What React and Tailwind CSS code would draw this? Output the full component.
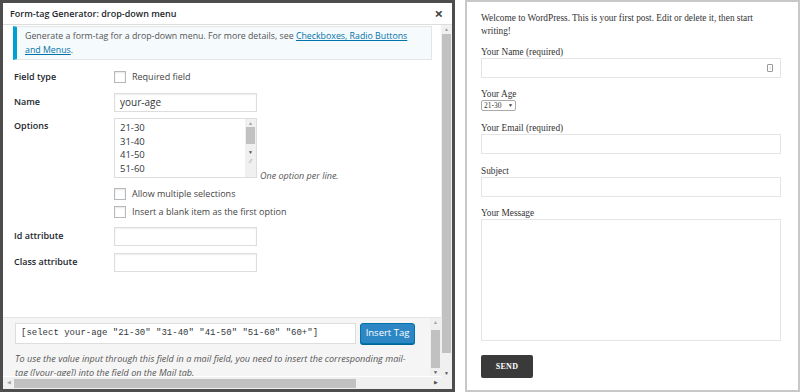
import React from 'react';

const ui = { fontFamily: '"Open Sans", "Noto Sans", sans-serif' };
const serif = { fontFamily: '"Liberation Serif", "DejaVu Serif", serif' };

const Checkbox = ({ label }) => (
  <label className="flex items-center gap-[6px] h-[18px]">
    <span className="w-[12px] h-[12px] border border-[#b4b9be] bg-white shadow-[inset_0_1px_2px_rgba(0,0,0,0.1)]"></span>
    <span className="text-[9px] text-[#444]">{label}</span>
  </label>
);

const TextInput = ({ value }) => (
  <div className="w-[143px] h-[19px] border border-[#ddd] bg-white shadow-[inset_0_1px_2px_rgba(0,0,0,0.07)] flex items-center px-[5px] text-[10px] text-[#32373c]">
    {value}
  </div>
);

const Row = ({ label, children, className = '' }) => (
  <div className={'flex ' + className}>
    <div className="w-[100px] text-[9px] font-semibold text-[#23282d] pt-[2px]">{label}</div>
    <div>{children}</div>
  </div>
);

// windows style scrollbar
const VScroll = ({ thumbTop, thumbBottom, className = '' }) => (
  <div className={'w-[11px] bg-[#f0f0f0] flex flex-col items-center ' + className}>
    <span className="text-[5px] leading-[8px] text-[#a3a3a3]">▲</span>
    <div className="w-[9px] bg-[#c1c1c1] flex-1" style={{ marginTop: thumbTop, marginBottom: thumbBottom }}></div>
    <span className="text-[5px] leading-[8px] text-[#505050]">▼</span>
  </div>
);

const FormTagGenerator = () => (
  <div className="w-[455px] h-[392px] border-[3px] border-[#4d4d4d] bg-white flex flex-col shrink-0" style={ui}>
    <div className="h-[22px] border-b border-[#ddd] flex items-center justify-between pl-[7px] pr-[9px] shrink-0">
      <span className="text-[9px] font-semibold text-[#23282d]">Form-tag Generator: drop-down menu</span>
      <span className="text-[15px] font-bold text-[#444] leading-none">×</span>
    </div>
    <div className="flex flex-1 min-h-0">
      <div className="flex flex-col w-[438px]">
        <div className="h-[292px] pl-[10px] pr-[9px] overflow-hidden">
          <div className="mt-[1px] border border-[#e5e5e5] border-l-[4px] border-l-[#00a0d2] bg-[#f5fafd] px-[8px] py-[2px] text-[8.8px] leading-[14px] text-[#555]">
            Generate a form-tag for a drop-down menu. For more details, see{' '}
            <span className="text-[#0073aa] underline">Checkboxes, Radio Buttons and Menus</span>.
          </div>
          <div className="flex flex-col mt-[8px] pl-[1px]">
            <Row label="Field type" className="h-[25px]">
              <Checkbox label="Required field" />
            </Row>
            <Row label="Name" className="h-[25px] items-start">
              <TextInput value="your-age" />
            </Row>
            <div className="flex">
              <div className="w-[100px] text-[9px] font-semibold text-[#23282d] pt-[1px]">Options</div>
              <div className="flex items-end gap-[3px]">
                <div className="w-[143px] h-[60px] border border-[#ddd] bg-white flex">
                  <div className="flex-1 pl-[5px] pt-[2px] text-[9.5px] leading-[13.5px] text-[#32373c]">
                    <div>21-30</div>
                    <div>31-40</div>
                    <div>41-50</div>
                    <div>51-60</div>
                  </div>
                  <div className="w-[11px] bg-[#f0f0f0] flex flex-col items-center">
                    <span className="text-[5px] leading-[8px] text-[#a3a3a3]">▲</span>
                    <div className="w-[9px] h-[17px] bg-[#c1c1c1]"></div>
                    <span className="text-[5px] leading-[10px] text-[#505050] mt-[3px]">▼</span>
                    <span className="text-[6px] leading-[8px] text-[#999]">⁄⁄</span>
                  </div>
                </div>
                <span className="text-[9px] italic text-[#555] leading-[12px] mb-[-4px]">One option per line.</span>
              </div>
            </div>
            <div className="pl-[100px] mt-[7px] flex flex-col">
              <Checkbox label="Allow multiple selections" />
              <Checkbox label="Insert a blank item as the first option" />
            </div>
            <Row label="Id attribute" className="h-[26px] mt-[6px] items-start">
              <TextInput value="" />
            </Row>
            <Row label="Class attribute" className="h-[26px] items-start">
              <TextInput value="" />
            </Row>
          </div>
        </div>
        <div className="h-[59px] bg-[#f5f5f5] border-t border-[#e5e5e5] flex">
          <div className="flex-1 pl-[12px] overflow-hidden">
            <div className="flex items-center gap-[4px] mt-[5px]">
              <div className="w-[341px] h-[21px] border border-[#ddd] bg-white flex items-center px-[5px] text-[9px] text-[#32373c] whitespace-nowrap" style={{ fontFamily: '"Liberation Mono", "DejaVu Sans Mono", monospace' }}>
                [select your-age "21-30" "31-40" "41-50" "51-60" "60+"]
              </div>
              <div className="w-[55px] h-[21px] bg-[#2e87c5] border border-[#0073aa] rounded-[3px] text-white text-[9.5px] flex items-center justify-center shadow-[0_1px_0_#006799]">
                Insert Tag
              </div>
            </div>
            <div className="mt-[8px] text-[9.1px] italic text-[#555] leading-[14px] w-[400px]">
              To use the value input through this field in a mail field, you need to insert the corresponding mail-tag ([your-age]) into the field on the Mail tab.
            </div>
          </div>
          <VScroll thumbTop={4} thumbBottom={0} />
        </div>
      </div>
      <VScroll thumbTop={1} thumbBottom={16} />
    </div>
    <div className="h-[12px] flex shrink-0">
      <div className="w-[438px] bg-[#f0f0f0] flex items-center">
        <span className="text-[5px] w-[11px] text-center text-[#a3a3a3]">◀</span>
        <div className="w-[342px] h-[9px] bg-[#c1c1c1]"></div>
        <div className="flex-1"></div>
        <span className="text-[5px] w-[11px] text-center text-[#505050]">▶</span>
      </div>
      <div className="flex-1 bg-[#f0f0f0]"></div>
    </div>
  </div>
);

const Label = ({ children }) => (
  <span className="text-[9.3px] leading-[12px] text-[#333]">{children}</span>
);

const Field = ({ label, className = 'h-[20px]' }) => (
  <div className="flex flex-col">
    <Label>{label}</Label>
    <div className={'w-[300px] border border-[#e5e5e5] bg-white ' + className}></div>
  </div>
);

const ContactForm = () => (
  <div className="flex-1 h-[392px] border-2 border-[#c8c8c8] bg-white pl-[14px] pt-[10px]" style={serif}>
    <p className="text-[9.3px] leading-[13px] text-[#333] w-[290px]">
      Welcome to WordPress. This is your first post. Edit or delete it, then start writing!
    </p>
    <div className="flex flex-col mt-[8px]">
      <div className="flex flex-col">
        <Label>Your Name (required)</Label>
        <div className="w-[300px] h-[20px] border border-[#e5e5e5] bg-white flex items-center justify-end pr-[7px]">
          <span className="w-[6px] h-[8px] border border-[#999] rounded-[1px] flex items-center justify-center text-[5px] text-[#999] leading-none">!</span>
        </div>
      </div>
      <div className="flex flex-col mt-[10px]">
        <Label>Your Age</Label>
        <div className="w-[35px] h-[11px] border border-[#aaa] rounded-[2px] bg-white flex items-center justify-between px-[2px] text-[7.5px] text-[#333]">
          <span>21-30</span>
          <span className="text-[5px]">▼</span>
        </div>
      </div>
      <div className="mt-[11px]">
        <Field label="Your Email (required)" />
      </div>
      <div className="mt-[11px]">
        <Field label="Subject" />
      </div>
      <div className="mt-[10px]">
        <Field label="Your Message" className="h-[122px]" />
      </div>
    </div>
    <div className="mt-[14px] w-[52px] h-[23px] bg-[#3a3a3a] rounded-[2px] text-white text-[8px] font-bold flex items-center justify-center tracking-[0.3px]">
      SEND
    </div>
  </div>
);

export default function App() {
  return (
    <div className="w-[800px] h-[392px] bg-white flex gap-[10px] overflow-hidden">
      <FormTagGenerator />
      <ContactForm />
    </div>
  );
}
